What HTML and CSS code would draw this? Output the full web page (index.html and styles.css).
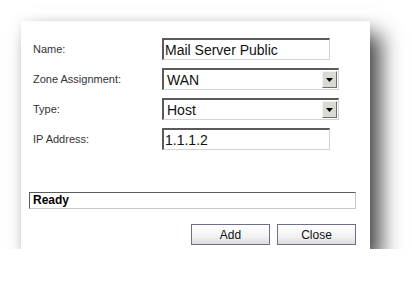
FILE: index.html
```html
<!DOCTYPE html>
<html>
<head>
<meta charset="utf-8">
<link rel="stylesheet" href="styles.css">
</head>
<body>
<div class="panel">
  <div class="form">
    <label class="lbl">Name:</label>
    <div class="field text">Mail Server Public</div>
    <label class="lbl">Zone Assignment:</label>
    <div class="field select"><span>WAN</span><span class="arrow"><svg width="7" height="4" viewBox="0 0 7 4"><path d="M0 0H7L3.5 4Z" fill="#000"/></svg></span></div>
    <label class="lbl">Type:</label>
    <div class="field select"><span>Host</span><span class="arrow"><svg width="7" height="4" viewBox="0 0 7 4"><path d="M0 0H7L3.5 4Z" fill="#000"/></svg></span></div>
    <label class="lbl">IP Address:</label>
    <div class="field text">1.1.1.2</div>
  </div>
  <div class="status">Ready</div>
  <div class="buttons">
    <button class="btn">Add</button>
    <button class="btn">Close</button>
  </div>
</div>
</body>
</html>
```
FILE: styles.css
```css
html, body {
  margin: 0;
  padding: 0;
  background: #fff;
}
body {
  padding: 21px 0 0 21px;
  font-family: "Liberation Sans", Arial, sans-serif;
}
.panel {
  width: 349px;
  height: 228px;
  box-sizing: border-box;
  background: #fff;
  box-shadow: 11px 13px 20px rgba(0, 0, 0, 0.7), 0 0 8px rgba(0, 0, 0, 0.07);
  padding: 17px 14px 0 8px;
  display: flex;
  flex-direction: column;
}
.form {
  display: grid;
  grid-template-columns: 133px auto;
  grid-auto-rows: 22px;
  row-gap: 8px;
  align-items: center;
  justify-items: start;
}
.lbl {
  font-size: 11px;
  color: #333;
  padding-left: 4px;
}
.field {
  box-sizing: border-box;
  height: 22px;
  border-top: 2px solid #5a5a5a;
  border-left: 2px solid #5a5a5a;
  border-right: 1px solid #d6d3cc;
  border-bottom: 1px solid #d6d3cc;
  font-size: 14px;
  color: #111;
  display: flex;
  align-items: center;
  padding-left: 1px;
  background: #fff;
}
.text {
  width: 168px;
}
.select {
  width: 177px;
  justify-content: space-between;
  padding-left: 3px;
  padding-right: 1px;
}
.arrow {
  width: 15px;
  height: 17px;
  box-sizing: border-box;
  background: #dcd9d2;
  border-top: 1px solid #f4f4f4;
  border-left: 1px solid #f4f4f4;
  border-right: 1px solid #6e6e6e;
  border-bottom: 1px solid #6e6e6e;
  display: flex;
  align-items: center;
  justify-content: center;
}
.status {
  margin-top: 42px;
  height: 17px;
  box-sizing: border-box;
  border-top: 1px solid #5c5c5c;
  border-left: 1px solid #5c5c5c;
  border-right: 1px solid #c8c8c8;
  border-bottom: 1px solid #c8c8c8;
  font-size: 12px;
  font-weight: bold;
  color: #000;
  padding-left: 3px;
  line-height: 15px;
}
.buttons {
  margin-top: 15px;
  display: flex;
  justify-content: flex-end;
  gap: 7px;
}
.btn {
  width: 79px;
  height: 21px;
  box-sizing: border-box;
  border: 1px solid #6f6f88;
  background: linear-gradient(#ffffff, #f2f2f2 60%, #dcdcdc);
  font-family: "Liberation Sans", Arial, sans-serif;
  font-size: 12px;
  color: #111;
  padding: 0;
}
```
